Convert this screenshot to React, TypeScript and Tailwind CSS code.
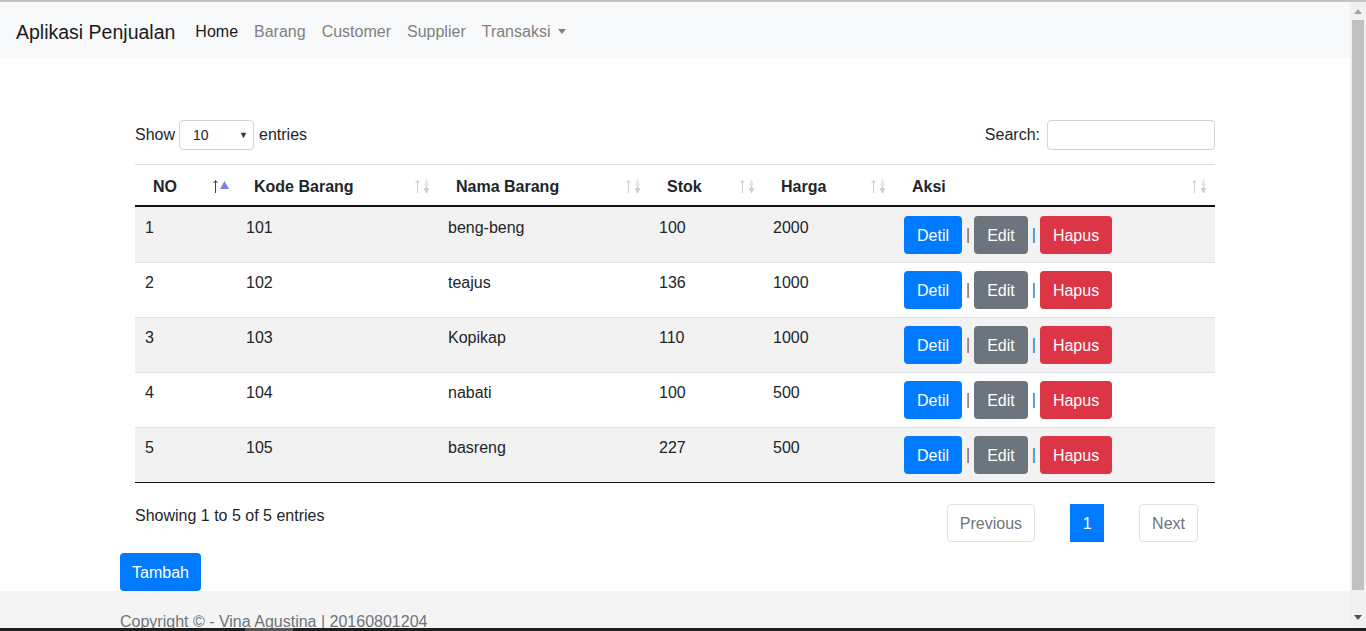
import React from 'react';

const barang = [
  { no: 1, kode: '101', nama: 'beng-beng', stok: 100, harga: 2000 },
  { no: 2, kode: '102', nama: 'teajus', stok: 136, harga: 1000 },
  { no: 3, kode: '103', nama: 'Kopikap', stok: 110, harga: 1000 },
  { no: 4, kode: '104', nama: 'nabati', stok: 100, harga: 500 },
  { no: 5, kode: '105', nama: 'basreng', stok: 227, harga: 500 },
];

const kolom = ['NO', 'Kode Barang', 'Nama Barang', 'Stok', 'Harga', 'Aksi'];

const grid = 'grid grid-cols-[101px_202px_211px_114px_131px_321px]';

// ikon sort ala datatables (panah tipis + segitiga)
function SortIcon({ active }: { active?: boolean }) {
  return (
    <svg width="18" height="16" viewBox="0 0 18 16" className="shrink-0">
      <line x1="2.5" y1="2" x2="2.5" y2="14" stroke={active ? '#444' : '#cfcfcf'} strokeWidth="1" />
      <path d="M0.5 4 L2.5 1.5 L4.5 4" fill="none" stroke={active ? '#444' : '#cfcfcf'} strokeWidth="1" />
      {active ? (
        <path d="M7 10 L11.5 2 L16 10 Z" fill="#7a82e8" />
      ) : (
        <>
          <line x1="11.5" y1="1" x2="11.5" y2="14" stroke="#d4d4d4" strokeWidth="1.5" />
          <path d="M8.5 9 L11.5 14.5 L14.5 9 Z" fill="#cfcfcf" />
          <path d="M8.5 6 L11.5 2 L14.5 6 Z" fill="#e6e6e6" />
        </>
      )}
    </svg>
  );
}

export default function App() {
  return (
    <div className="w-[1366px] h-[631px] overflow-hidden flex flex-col bg-white text-[#212529] font-['Liberation_Sans',Arial,sans-serif] text-base leading-6">
      <div className="h-[2px] bg-[#c4c4c4] shrink-0" />
      <div className="flex flex-1 min-h-0">
        <div className="flex-1 flex flex-col min-h-0">
          {/* navbar */}
          <nav className="h-[56px] shrink-0 bg-[#f8f9fa] flex items-center px-4 pt-[3px]">
            <span className="text-[19.5px] leading-[30px] text-[#1a1a1a] mr-[12px]">Aplikasi Penjualan</span>
            <a className="px-2 text-[#1a1a1a]">Home</a>
            <a className="px-2 text-[#808080]">Barang</a>
            <a className="px-2 text-[#808080]">Customer</a>
            <a className="px-2 text-[#808080]">Supplier</a>
            <a className="px-2 text-[#808080] flex items-center">
              Transaksi
              <span className="ml-[8px] w-0 h-0 border-t-[5px] border-t-[#808080] border-x-[4.5px] border-x-transparent" />
            </a>
          </nav>

          <div className="flex-1 min-h-0 flex flex-col">
            <div className="w-[1110px] mx-auto pt-[61px]">
              <div className="px-[15px]">
                {/* show & search */}
                <div className="flex justify-between items-center h-[30px] pt-[2px]">
                  <div className="flex items-center">
                    <span>Show</span>
                    <div className="ml-[4px] mr-[5px] w-[75px] h-[30px] border border-[#ced4da] rounded flex items-center justify-between pl-[13px] pr-[5px] text-[14px]">
                      <span>10</span>
                      <span className="text-[9px] text-[#333]">▼</span>
                    </div>
                    <span>entries</span>
                  </div>
                  <div className="flex items-center">
                    <span>Search:</span>
                    <div className="ml-[7px] w-[168px] h-[30px] border border-[#ced4da] rounded bg-white" />
                  </div>
                </div>

                {/* tabel */}
                <div className="mt-[15px] border-t border-[#dee2e6] border-b border-b-[#111]">
                  <div className={`${grid} border-b-2 border-[#111] font-bold`}>
                    {kolom.map((k, i) => (
                      <div key={k} className="flex items-center justify-between pl-[18px] pr-[5px] pt-[10px] pb-[6px]">
                        <span>{k}</span>
                        <SortIcon active={i === 0} />
                      </div>
                    ))}
                  </div>
                  {barang.map((b, i) => (
                    <div
                      key={b.no}
                      className={`${grid} h-[55px] border-t ${i === 0 ? 'border-transparent' : 'border-[#dee2e6]'} ${i % 2 === 0 ? 'bg-[#f2f2f2]' : 'bg-white'}`}
                    >
                      <div className="pl-[10px] pt-[8px]">{b.no}</div>
                      <div className="pl-[10px] pt-[8px]">{b.kode}</div>
                      <div className="pl-[10px] pt-[8px]">{b.nama}</div>
                      <div className="pl-[10px] pt-[8px]">{b.stok}</div>
                      <div className="pl-[10px] pt-[8px]">{b.harga}</div>
                      <div className="pl-[10px] pt-[8px] flex items-start">
                        <button className="h-[38px] px-[13px] pt-[2px] rounded bg-[#007bff] text-white">Detil</button>
                        <span className="mx-[4px] leading-[38px] text-[#9a5a22]">|</span>
                        <button className="h-[38px] px-[13px] pt-[2px] rounded bg-[#6c757d] text-white">Edit</button>
                        <span className="mx-[4px] leading-[38px] text-[#2a6fb0]">|</span>
                        <button className="h-[38px] px-[13px] pt-[2px] rounded bg-[#dc3545] text-white">Hapus</button>
                      </div>
                    </div>
                  ))}
                </div>

                {/* info & paginasi */}
                <div className="mt-[21px] flex justify-between items-start">
                  <span>Showing 1 to 5 of 5 entries</span>
                  <div className="flex gap-[35px] mr-[17px]">
                    <div className="h-[38px] px-[12px] pt-[2px] flex items-center border border-[#dee2e6] rounded text-[#6c757d]">Previous</div>
                    <div className="h-[38px] w-[34px] pt-[2px] flex items-center justify-center bg-[#007bff] text-white">1</div>
                    <div className="h-[38px] px-[12px] pt-[2px] flex items-center border border-[#dee2e6] rounded text-[#6c757d]">Next</div>
                  </div>
                </div>
              </div>

              <button className="mt-[11px] h-[38px] px-[12px] pt-[2px] rounded bg-[#007bff] text-white">Tambah</button>
            </div>

            {/* footer */}
            <footer className="flex-1 bg-[#f4f4f4]">
              <div className="w-[1110px] mx-auto pt-[19px] text-[#6c757d]">
                Copyright © - Vina Agustina | 20160801204
              </div>
            </footer>
          </div>
        </div>

        {/* scrollbar browser */}
        <div className="w-[16px] shrink-0 bg-[#f1f1f1] flex flex-col items-center">
          <div className="h-[18px] flex items-center justify-center">
            <span className="w-0 h-0 border-b-[5px] border-b-[#a3a3a3] border-x-[4px] border-x-transparent" />
          </div>
          <div className="w-[12px] h-[570px] bg-[#c1c1c1]" />
          <div className="flex-1 flex items-end justify-center pb-[8px]">
            <span className="w-0 h-0 border-t-[5px] border-t-[#505050] border-x-[4px] border-x-transparent" />
          </div>
        </div>
      </div>
      <div className="h-[3px] shrink-0 bg-[#1e1e1e] flex">
        <div className="w-[245px]" />
        <div className="w-[48px] bg-[#555]" />
      </div>
    </div>
  );
}
